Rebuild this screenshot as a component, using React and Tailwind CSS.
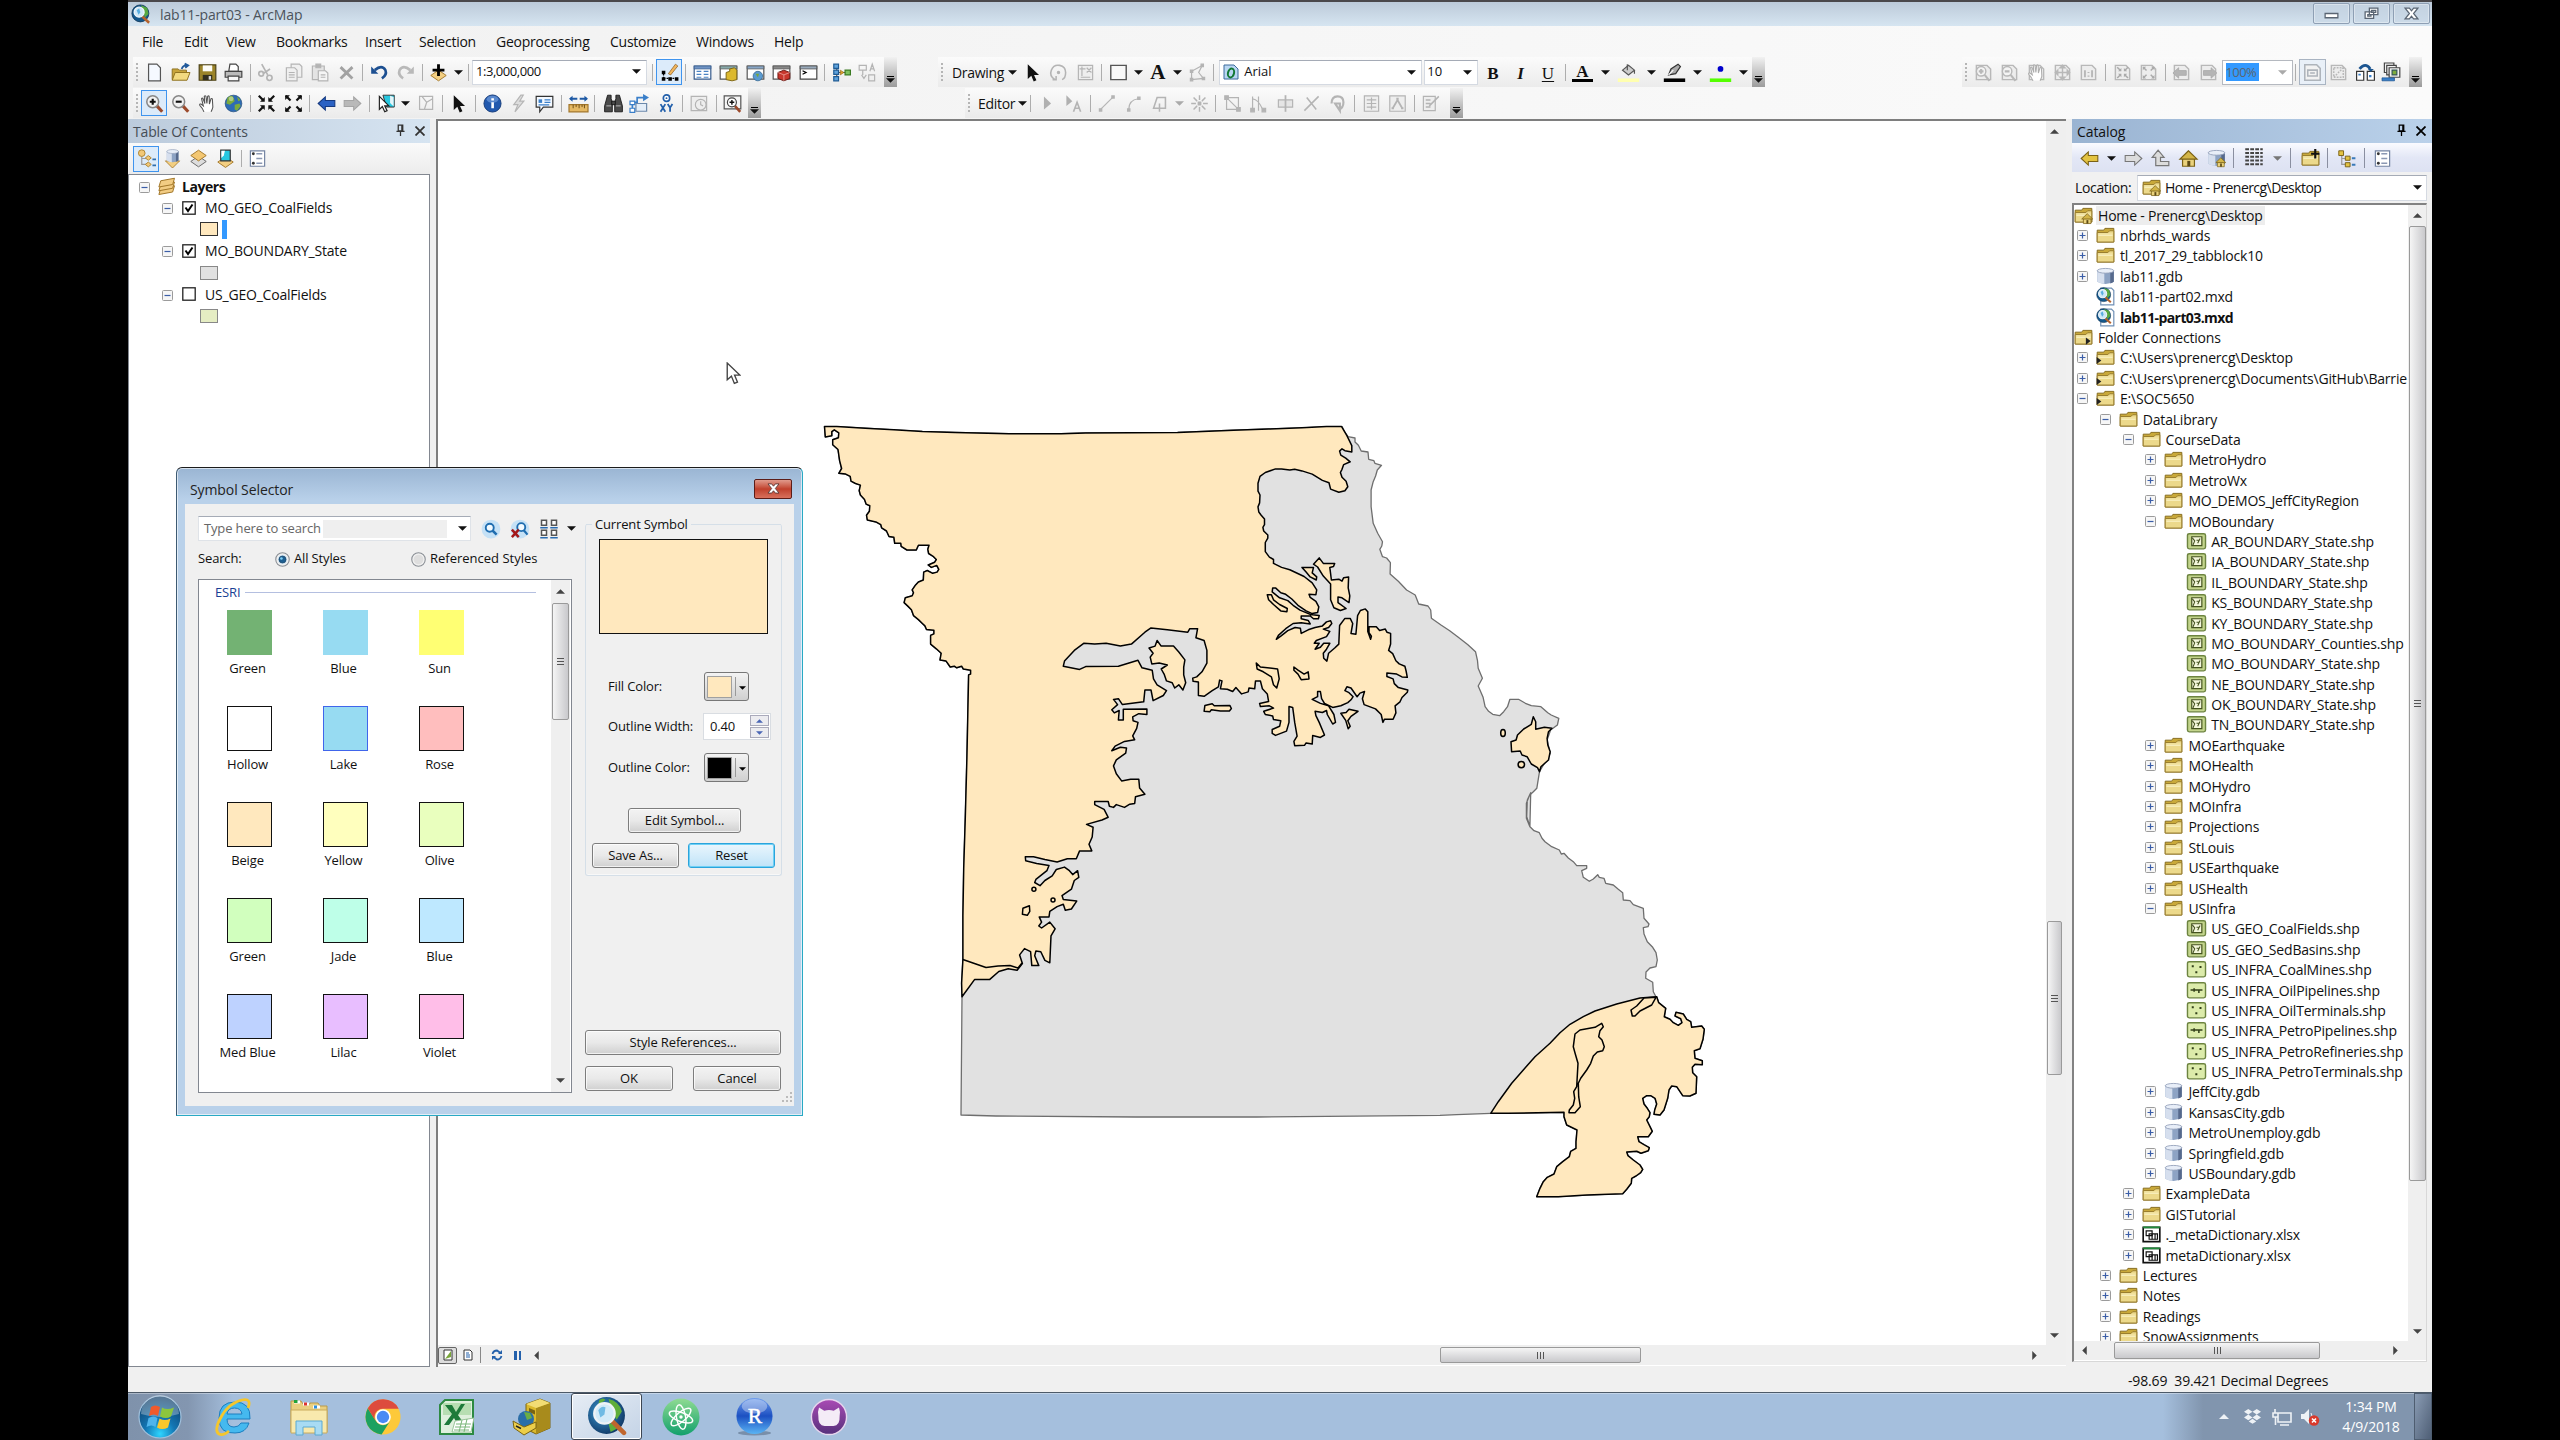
import React from "react";

/* ---------- map geometry ---------- */
const tile = (s, ox, oy, sx, sy) =>
  s
    .trim()
    .split(/\s+/)
    .map((p) => {
      const [x, y] = p.split(",").map(Number);
      return [ox + x / sx, oy + y / sy];
    });
const west = (s) => tile(s, 364, 291, 2.45, 2.529);
const east = (s) => tile(s, 764, 291, 2.904, 3);
const south = (s) => tile(s, 1004, 661, 3, 3);
const path = (pts) => "M" + pts.map((p) => p[0].toFixed(1) + " " + p[1].toFixed(1)).join("L") + "Z";

const TOP = "60,42 90,42 160,46 230,50 300,54 380,57 512,60 640,60 700,58 925,57 1062,51 1148,48 1230,45 1290,42 1327,42";
const LEFT =
  "397,1484 396,1450 399,1390 399,1280 401,1160 405,1030 409,880 411,770 413,670 418,668 418,658 400,655 396,648 384,652 378,648 368,650 358,635 343,632 346,615 334,604 320,592 320,570 328,566 328,557 310,555 306,546 300,540 290,530 278,520 273,505 264,496 255,487 258,475 275,470 278,462 275,455 282,444 290,435 302,430 303,410 312,406 325,413 336,410 340,403 335,393 322,398 314,392 330,385 334,378 326,370 315,363 313,352 316,342 290,342 285,354 262,354 248,345 247,337 232,337 230,322 218,320 212,306 200,298 198,290 186,283 165,278 163,266 170,256 171,242 162,238 158,226 148,215 145,204 148,190 136,186 125,180 123,168 112,162 95,160 102,148 97,128 93,100 80,88 80,75 94,70 95,58 84,50 78,55 78,65 62,68";
const COAL =
  TOP +
  " 1340,65 1352,90 1352,106 1335,103 1328,98 1322,104 1325,114 1337,122 1348,131 1332,138 1328,150 1324,158 1328,170 1338,180 1342,194 1335,204 1320,208 1300,200 1296,184 1280,178 1255,162 1230,154 1212,150 1200,152 1180,149 1165,149 1140,158 1127,168 1122,185 1122,205 1127,215 1126,235 1122,245 1124,258 1130,266 1138,276 1138,290 1134,297 1136,306 1146,316 1146,324 1140,335 1140,358 1150,372 1160,378 1160,388 1180,398 1200,404 1235,421 1255,437 1266,455 1264,467 1247,466 1250,474 1264,484 1271,498 1268,512 1255,515 1240,508 1220,494 1205,478 1190,466 1178,462 1165,450 1158,450 1157,460 1175,475 1195,482 1208,494 1225,506 1250,517 1272,520 1270,528 1258,528 1250,521 1228,521 1228,528 1245,532 1250,541 1228,538 1208,540 1190,553 1172,570 1167,580 1178,572 1195,558 1213,550 1226,552 1228,565 1245,556 1262,550 1280,546 1290,536 1300,533 1303,540 1295,550 1282,554 1298,560 1290,573 1265,583 1260,590 1272,590 1262,605 1275,600 1283,590 1298,590 1290,605 1282,615 1283,628 1291,635 1295,615 1310,602 1320,592 1322,545 1335,527 1348,527 1354,540 1350,565 1362,567 1366,520 1373,507 1385,503 1391,510 1391,560 1398,580 1400,572 1394,563 1394,548 1412,548 1420,558 1434,554 1438,562 1447,565 1447,592 1442,608 1452,616 1460,634 1468,642 1482,648 1485,660 1488,676 1475,675 1462,668 1438,665 1438,674 1453,680 1456,692 1466,702 1489,708 1488,714 1475,727 1470,738 1458,748 1460,766 1453,782 1432,782 1428,790 1424,770 1410,756 1382,745 1378,730 1383,712 1372,716 1365,725 1350,703 1340,700 1335,710 1345,715 1355,725 1350,733 1342,740 1325,748 1305,752 1285,742 1278,730 1275,712 1268,712 1268,725 1255,732 1275,742 1295,748 1308,770 1312,790 1305,794 1292,770 1290,760 1280,765 1262,762 1264,773 1272,790 1285,822 1275,828 1256,823 1255,845 1240,842 1236,848 1212,849 1210,838 1218,825 1212,790 1207,752 1198,750 1198,790 1192,812 1165,823 1157,818 1157,808 1175,800 1178,786 1160,783 1158,774 1140,770 1136,762 1160,754 1150,748 1128,750 1126,742 1148,737 1145,718 1133,705 1128,685 1116,685 1114,705 1100,703 1098,713 1082,718 1068,702 1060,712 1047,706 1030,705 1034,685 1028,683 1025,700 1010,710 990,724 976,722 976,688 963,686 962,678 972,675 985,662 997,640 997,608 990,583 970,576 974,553 955,553 950,562 900,556 860,551 845,562 812,592 785,597 750,590 722,592 695,590 672,608 648,635 645,648 685,656 700,649 780,648 828,633 838,652 863,658 866,680 875,695 898,710 890,722 865,735 860,708 845,708 842,738 790,745 780,730 768,732 778,745 764,758 770,766 782,760 780,784 792,784 792,757 850,756 850,770 830,768 815,776 816,786 828,790 825,805 815,824 820,834 795,838 772,850 764,862 785,853 800,855 798,868 775,885 768,900 775,920 788,938 810,934 830,934 832,956 845,972 822,978 820,995 808,997 795,1005 775,998 768,1005 758,1002 755,990 722,990 722,998 745,1010 755,1030 740,1037 702,1048 718,1055 716,1080 708,1098 715,1115 685,1115 677,1135 655,1135 630,1143 600,1137 572,1130 552,1130 553,1140 580,1147 610,1152 605,1165 578,1187 575,1195 588,1203 600,1190 618,1178 628,1162 648,1156 660,1165 668,1175 680,1165 683,1182 672,1190 665,1212 642,1228 645,1238 678,1242 665,1262 650,1265 645,1250 630,1256 612,1268 610,1282 586,1282 592,1295 585,1305 592,1310 612,1295 625,1312 615,1330 612,1398 600,1392 590,1370 578,1368 575,1380 585,1405 568,1405 565,1370 550,1362 538,1378 545,1400 532,1417 510,1413 487,1420 465,1440 428,1440 " +
  LEFT;
const RIVER =
  "413,50 420,66 430,80 450,84 450,96 460,106 468,123 488,126 490,148 505,152 508,160 527,166 515,180 510,198 503,215 497,240 497,290 503,340 516,370 530,395 528,408 522,418 530,440 542,444 553,458 552,492 576,514 600,540 625,555 635,582 662,588 670,600 672,625 700,645 725,662 750,682 778,704 800,725 806,752 808,775 820,805 808,828 822,862 828,890 838,904 850,913 870,917 882,905 893,890 900,868 925,868 945,880 962,887 990,890 1010,908 1020,915 1042,925 1038,945 1018,960 1008,990 1017,1030 986,1085 978,1135 965,1148 955,1160 948,1180 948,1225 958,1250";
const DELTA =
  "272,38 262,60 260,110 270,140 282,152 298,158 306,175 315,185 335,200 358,210 364,222 372,220 385,234 400,245 410,257 440,257 440,265 425,272 430,292 448,304 460,297 473,284 478,292 492,295 497,310 520,315 535,328 548,338 550,360 570,362 580,374 610,385 612,415 627,432 624,440 610,443 612,462 622,485 638,502 648,518 652,540 648,560 630,564 618,576 617,595 638,607 640,635 648,650";
const HEEL_EDGE =
  "650,650 656,668 677,685 673,710 690,718 700,728 715,736 726,728 722,716 705,708 708,697 730,702 740,718 752,725 755,742 785,738 793,748 789,778 780,806 763,812 765,835 787,842 787,854 765,853 757,862 758,878 770,890 768,940 750,948 728,947 710,920 695,918 687,930 683,955 672,990 660,1005 642,1003 644,990 650,972 645,955 632,947 620,947 608,955 612,972 622,985 630,998 628,1010 620,1020 630,1040 637,1054 625,1070 593,1070 597,1085 612,1094 628,1103 625,1112 603,1120 590,1114 560,1116 564,1127 580,1140 600,1155 608,1168 602,1178 588,1188 575,1195 574,1210 560,1228 548,1241 440,1245 355,1250 290,1250 300,1225 310,1205 322,1192 342,1182 350,1160 368,1145 388,1130 392,1114 408,1105 408,1085 411,1050 380,1035 372,1010 372,997 205,1000";
const HEEL = "152,1000 175,965 215,910 250,870 285,830 330,790 360,758 390,733 430,710 465,693 530,672 600,654 " + HEEL_EDGE;
const ISLANDS = [
  "875,583 885,597 915,597 928,612 943,632 940,650 940,670 945,690 938,708 928,695 918,703 912,690 898,685 892,668 885,655 900,645 880,640 862,642 858,625 865,615 855,602 870,597",
  "992,747 1010,743 1015,748 1053,747 1057,755 1052,761 1030,761 1008,758 1004,763 990,762",
  "1272,374 1282,388 1310,388 1307,396 1298,398 1302,430 1320,428 1328,433 1332,424 1344,422 1343,450 1347,470 1345,487 1328,475 1318,473 1318,487 1338,502 1324,507 1308,500 1300,480 1300,440 1282,420 1268,397 1258,390",
  "1230,398 1258,398 1255,412 1266,422 1265,430 1250,422 1240,410",
  "1325,767 1338,765 1345,757 1367,762 1350,775 1342,786 1348,800 1343,806 1337,785",
  "1145,467 1155,467 1160,480 1175,492 1194,502 1193,510 1178,508 1160,492 1148,480",
  "1118,640 1128,650 1170,655 1174,680 1168,703 1160,695 1155,675 1135,662 1120,655",
  "1210,650 1220,658 1235,668 1245,662 1247,680 1228,682 1220,668 1210,658",
  "545,1275 546,1260 562,1254 563,1268 557,1278",
].map((s) => path(west(s)));
const EAST_FIELD = "968,920 975,935 975,958 1000,952 1022,955 1012,965 1008,985 1010,1005 1017,1025 1012,1050 990,1070 986,1085 980,1073 962,1062 950,1040 935,1035 930,1023 905,1025 903,995 918,990 922,975 940,957 962,943";
const STATE = [
  ...west(TOP),
  ...east(RIVER),
  ...south(DELTA),
  ...south(HEEL_EDGE),
  ...south("152,1000 50,1004 0,1006"),
  [821, 998], [700, 998], [560, 997], [525, 996],
  ...west(LEFT),
];

function MissouriMap() {
  return (
    <svg className="h-full w-full" viewBox="2 2 1608 1224" fill="none" strokeLinejoin="round">
      <path d={path(STATE)} fill="#e1e1e1" stroke="#6e6e6e" strokeWidth="1.3" />
      <g fill="#ffe8be" stroke="#000" strokeWidth="1.500">
        <path d={path(west(COAL))} />
        {ISLANDS.map((d, i) => (
          <path key={i} d={d} />
        ))}
        <path d={path(east(EAST_FIELD))} />
        <path d={path(south(HEEL))} />
        <path d={path(south("485,730 490,740 480,752 476,770 486,780 493,800 488,812 472,816 460,828 452,850 440,870 422,895 415,910 416,950 421,980 405,998 387,998 388,990 400,975 404,955 401,935 410,920 414,850 406,822 400,800 405,762 420,750 465,742"))} />
        <path d={path(south("612,654 590,678 573,690 577,708 585,708 600,693 635,675 648,652"))} />
        <path fill="none" d="M526.9 840.5L537 844L550 848.5L562 847L574 846.500L582 849L586 844" />
        <circle cx="597.9" cy="770.2" r="2" />
        <circle cx="617" cy="781" r="2" />
        <ellipse cx="1067" cy="614" rx="2.3" ry="3.6" />
        <circle cx="1085.300" cy="645.6" r="3.2" />
      </g>
    </svg>
  );
}

/* ---------- icons ---------- */
const G = "#b4b4b4";
const Folder = (
  <g>
    <path d="M1 3.5h5.500l1-1.500H15v11.500H1z" fill="#c9a93a" stroke="#84691a" strokeWidth=".8" />
    <path d="M1 5.500h9l1.500-1.500H15v9.500H1z" fill="#ecd98b" stroke="#96792a" strokeWidth=".8" />
    <path d="M2 8h12M2 6.800h12" stroke="#f8eebc" strokeWidth=".8" />
  </g>
);
const page = (c, f = "#fff") => <path d="M3 1h7l3 3v11H3z" fill={f} stroke={c} />;
const magnifier = (sign) => (
  <g>
    <path d="M10 10l4.500 5" stroke="#9c4a2c" strokeWidth="2.600" />
    <circle cx="6.500" cy="6.500" r="5" fill="#f2f2f2" stroke="#888" strokeWidth="1.300" />
    <path d={sign ? "M4 6.500h5M6.500 4v5" : "M4 6.500h5"} stroke="#111" strokeWidth="1.800" />
  </g>
);
const globe = (
  <g>
    <circle cx="8" cy="8" r="7" fill="#2d6bb5" stroke="#1f4a7c" strokeWidth=".6" />
    <path d="M3 3q4-3 5 0l1 3-4 3-3-1zM9 9l4-1 1 2-3 4-2-1zM11 2l3 3-2 1z" fill="#7cab3c" />
    <circle cx="6" cy="4" r="2" fill="#fff" opacity=".4" />
  </g>
);
const arcGlobe = (
  <g>
    <circle cx="7.500" cy="7.500" r="6.800" fill="#14588c" stroke="#0b2f52" strokeWidth=".6" />
    <path d="M8 1l5 2 1 5-3 3-1-4z" fill="#58a842" />
    <path d="M9 10l5.500 5" stroke="#b5622c" strokeWidth="2" />
    <circle cx="6.500" cy="6.500" r="4" fill="#cfe8f7" stroke="#f1f6fa" strokeWidth="1" />
    <path d="M4.500 5l2-1.500 1 3-1.500 2z" fill="#5aaee0" />
  </g>
);
const cyl = (
  <g>
    <path d="M1 3v9.500q7 3.500 14 0V3z" fill="#8da3c4" />
    <path d="M1 3v9.500q2.500 1.500 6 1.700V4z" fill="#d6dfee" />
    <path d="M12 4v9.800q2-.3 3-1.300V3z" fill="#56698c" />
    <ellipse cx="8" cy="3.200" rx="7" ry="2" fill="#e8eef8" stroke="#8d9bb5" strokeWidth=".7" />
  </g>
);
const diamond = (y, f, s) => <path d={`M8 ${y}l6.500 4.500-6.500 4.500-6.500-4.500z`} fill={f} stroke={s} strokeWidth=".8" />;
const hand = (c) => (
  <path d="M5 15q-1-3-3.500-5.500q-.5-1.500 1-1l2 1.500-1.500-6q.5-1 1.300 0l1.500 4-.5-6q.7-1 1.400 0l.8 6 .6-6q.8-.8 1.300 0l.2 6.500 1.300-4.500q1-.6 1.200.4L12.500 11q-.5 2-1.500 4" fill="#fff" stroke={c} strokeWidth=".9" />
);
const house = (x, y, s) => (
  <g transform={`translate(${x} ${y}) scale(${s})`}>
    <path d="M3 8v6.500h10V8z" fill="#ead27c" stroke="#7a6116" />
    <path d="M8 1.500L.8 8.500h14.400z" fill="#d3b548" stroke="#7a6116" />
    <path d="M7 10h2.500v4.500H7z" fill="#5c4a15" />
  </g>
);
const arrowL = (f, s) => <path d="M1 8l6-5.500v3h8v5H7v3z" fill={f} stroke={s} strokeWidth=".9" />;
const arrowR = (f, s) => <path d="M15 8L9 2.500v3H1v5h8v3z" fill={f} stroke={s} strokeWidth=".9" />;
const corners = (inward, c, k = 1) => (
  <g stroke={c} strokeWidth={1.800 * k} fill={c}>
    {[0, 90, 180, 270].map((a) => (
      <g key={a} transform={`rotate(${a} 8 8)`}>
        <path d="M1.500 1.500l4 4" />
        <path d={inward ? "M6.500 2.500v4h-4z" : "M1 5V1h4z"} stroke="none" />
      </g>
    ))}
  </g>
);
const table = (c, h) => (
  <g>
    <path d="M1 2.500h14v11H1z" fill="#fff" stroke={c} />
    <path d="M1 2.500h14v2.500H1z" fill={h} stroke={c} strokeWidth=".6" />
  </g>
);
const greyPage = (inner) => (
  <g fill="none" stroke="#b8b8b8" strokeWidth="1.200">
    <path d="M2 2h9l3 3v9H2z" fill="#ededed" />
    {inner}
  </g>
);
const listIcon = (
  <g>
    <path d="M2 1.500h12v13H2z" fill="#fff" stroke="#7484a2" />
    <path d="M7 4h5M7 8h5M7 12h5" stroke="#8b98b3" strokeWidth="1.300" />
    <circle cx="4.500" cy="4" r="1.200" fill="#333" />
    <circle cx="4.500" cy="12" r="1.200" fill="#333" />
  </g>
);
const shp = (f, inner) => (
  <g>
    <rect x=".4" y="1.400" width="15.200" height="12.800" rx="1.500" fill={f} stroke="#6d8440" strokeWidth="1.200" />
    {inner}
  </g>
);
const treeIcon = (a, b) => (
  <g>
    <path d="M4 5v8h6M4 8h5" stroke="#999" fill="none" />
    <path d="M1.500 1.500h4v4h-4zM7 6h4v3.500H7zM7 11.500h4V15H7z" fill={a} stroke={b} strokeWidth=".8" />
    <path d="M12.500 7h3v1.700h-3zM12.500 12.500h3v1.700h-3z" fill="#3a7ab8" />
  </g>
);

const I = {
  new: page("#555", "#f5f9ff"),
  open: <g><path d="M1 5h5l1 1h6v8H1z" fill="#c7a43b" stroke="#8c701d" strokeWidth=".8" /><path d="M3.500 8H16l-2.500 6.500H1z" fill="#f2da80" stroke="#8c701d" strokeWidth=".8" /><path d="M9 5q1-3 4-3M11.500 .5l3 1.500-2.500 2" stroke="#20599b" fill="none" strokeWidth="1.500" /></g>,
  save: <g><path d="M1 1.500h14v13H1z" fill="#9b8429" stroke="#4d4317" /><path d="M4 2h8v5H4z" fill="#fdfdf8" /><path d="M4 10h8v4.500H4z" fill="#33301f" /><path d="M9 11h2v3H9z" fill="#ddd" /></g>,
  print: <g><path d="M5 1h5l2 2v4H4z" fill="#fff" stroke="#444" /><path d="M1 7h14v5H1z" fill="#bbb" stroke="#444" /><path d="M3.500 11h9v4h-9z" fill="#f8f8f8" stroke="#444" /></g>,
  cut: <g stroke={G} strokeWidth="1.400" fill="none"><path d="M4 1l5 9M11 5L5 9" /><circle cx="10.500" cy="12.500" r="2.200" /><circle cx="3.500" cy="9" r="2" /></g>,
  copy: <g stroke={G} fill="#f0f0f0"><path d="M6 1h7l2 2v9H6z" /><path d="M2 4h7l2 2v9H2z" /><path d="M4 8h5M4 10h5M4 12h5" /></g>,
  paste: <g stroke={G} fill="#e4e4e4"><path d="M2 2.500h10V14H2z" /><path d="M5 1h4v3H5z" fill={G} /><path d="M7 6.500h6l2 2V15H7z" fill="#f5f5f5" /><path d="M9 10h4M9 12h4" /></g>,
  del: <path d="M3 3.500l10 9.500M13 3.500L3 13" stroke="#a2a2a2" strokeWidth="2.400" />,
  undo: <g><path d="M4 6q6-5 9 0q1.500 4-3 7" stroke="#1c4f91" strokeWidth="2.200" fill="none" /><path d="M1 3v6h6z" fill="#1c4f91" /></g>,
  redo: <g><path d="M12 6q-6-5-9 0q-1.500 4 3 7" stroke="#b9b9b9" strokeWidth="2.200" fill="none" /><path d="M15 3v6H9z" fill="#b9b9b9" /></g>,
  add: <g>{diamond(6, "#f3cf82", "#a3782a")}<path d="M8 1v10M3 6h10" stroke="#000" strokeWidth="2.400" /></g>,
  edit: <g><path d="M3 13h10M3 13V8" stroke="#000" strokeDasharray="1.500 1" /><path d="M1.500 6.500h3v3h-3zM1.500 12h3v3h-3zM7 12h3v3H7zM12.500 12h3v3h-3z" fill="#000" /><path d="M7 9l6-8 2 1.500L9 10z" fill="#f2b65c" stroke="#8b5a1c" strokeWidth=".6" /></g>,
  t1: <g>{table("#355a8c", "#6f93c4")}<path d="M3 7h4M3 9.500h4M3 12h4M9 7h4M9 9.500h4M9 12h4" stroke="#4a83c4" /></g>,
  t2: <g>{table("#555", "#8aa")}<path d="M6 8l3-1v-2l4-1 2 2v8l-4 1-5-1z" fill="#dcb92e" stroke="#7d6513" strokeWidth=".8" /></g>,
  t3: <g>{table("#555", "#88a6c6")}<circle cx="10" cy="11" r="4" fill="#5b9bd0" stroke="#2b5f8a" strokeWidth=".6" /><path d="M8 9l3 0-1 3z" fill="#79a63a" /></g>,
  t4: <g>{table("#555", "#888")}<path d="M5 8l5-2 5 2v5l-5 2-5-2z" fill="#c8362c" stroke="#6d1712" strokeWidth=".8" /><path d="M5 8l5 2 5-2M10 10v5" stroke="#f0b0a8" strokeWidth=".6" fill="none" /></g>,
  t5: <g>{table("#444", "#9ab")}<path d="M3 6.500l3 1.500-3 1.500" stroke="#000" fill="none" /></g>,
  model: <g><path d="M4 3v10M4 8h8" stroke="#555" /><path d="M1.500 1h4v3.500h-4zM1.500 6h4v3.500h-4zM1.500 11.500h4V15h-4z" fill="#5fa3dc" stroke="#1d5a94" /><path d="M7 6l3 2-3 2z" fill="#dfa22c" stroke="#8d6214" strokeWidth=".5" /><path d="M11 6h4.500v4H11z" fill="#7fc25f" stroke="#3a7a22" /></g>,
  labelTool: <g stroke={G} fill="none"><path d="M1 2h6v4H1zM4 6v4M10 7l2-6 2 6M11 5h2.500M9 10h5v5H9zM3 10l2 3 2-3" /></g>,
  zin: magnifier(true),
  zout: magnifier(false),
  pan: hand("#555"),
  globe,
  cin: corners(true, "#111"),
  cout: corners(false, "#111"),
  back: arrowL("#2b62c4", "#163a80"),
  fwd: arrowR("#b9b9b9", "#a5a5a5"),
  selF: <g><path d="M5 1h9.500v10H8z" fill="#27c8e0" stroke="#333" strokeWidth=".8" /><path d="M11 1.500l3 1v8l-3-3z" fill="#e4f5fa" /><path d="M2 2v11l2.500-2.500 2 4.500 2-1-2-4h3.500z" fill="#fff" stroke="#222" /></g>,
  selC: <g stroke={G} fill="none"><path d="M3 2h11v11H3zM5 2l4 5-2 6M9 7l5-3" /></g>,
  ptr: <path d="M4 1v12.500l3-2.800 2 4.800 2.300-1-2-4.500H13.500z" fill="#111" />,
  info: <g><circle cx="8" cy="8" r="7.200" fill="#2259ae" stroke="#143a78" strokeWidth=".8" /><ellipse cx="8" cy="4.500" rx="5" ry="3" fill="#7fa9e3" opacity=".6" /><path d="M7 7h2.200v5H7zM7 3.500h2.200v2H7z" fill="#fff" /></g>,
  bolt: <path d="M10 1L4 9h3.500L5 15l7.500-9H9l3-5z" fill="#ddd" stroke="#b5b5b5" />,
  popup: <g><path d="M1 2h14v9H7l-3 4v-4H1z" fill="#f4f9ff" stroke="#333" /><path d="M3 4.500h3v3H3z" fill="#3a7fc9" /><path d="M8 5h5M8 7h5M3 9.200h9" stroke="#3a7fc9" /></g>,
  measure: <g><path d="M0 9h16v6H0z" fill="#e5b964" stroke="#a2762a" /><path d="M3.500 9v3M6 9v2M8.500 9v3M11 9v2M13 9v3" stroke="#6d4d15" strokeWidth=".8" /><path d="M1 4h6M9 4h6" stroke="#1f5aa5" strokeWidth="1.600" /><path d="M0 4l3-2.500v5zM16 4l-3-2.500v5z" fill="#1f5aa5" /></g>,
  binoc: <g fill="#4a4a4a" stroke="#111" strokeWidth=".7"><path d="M3 1h3v3l1 3v8H.5v-5zM10 1h3l2.500 9v5H9V7l1-3z" /><path d="M6.500 6h3v3h-3z" /><path d="M2 10h4M10 10h4" stroke="#ccc" /></g>,
  route: <g fill="none"><path d="M2 14V7h4V3h6" stroke="#3a7fc9" strokeWidth="1.400" /><path d="M11 0l5 3-5 3z" fill="#3a7fc9" /><path d="M5 8h9v6.500H5z" fill="#e4eef8" stroke="#6b88aa" /><path d="M0 12h4v3.500H0zM0 6h4v3H0z" fill="#fff" stroke="#3a7fc9" /></g>,
  xy: <g><circle cx="8" cy="3.500" r="2.700" fill="#fff" stroke="#2360ab" strokeWidth="1.400" /><circle cx="8" cy="3.500" r=".8" fill="#2360ab" /><path d="M3 8.500l4 6.500M7 8.500L3 15M9 8.500l2 3 2-3M11 11.500V15" stroke="#2360ab" strokeWidth="1.500" fill="none" /></g>,
  time: <g stroke={G} fill="#eee"><path d="M1 2h13v12H1z" /><circle cx="9" cy="9" r="4.500" /><path d="M9 6v3l2 1" fill="none" /></g>,
  viewer: <g><path d="M1 1.500h14v11H1z" fill="#f5f5f5" stroke="#555" /><path d="M10 10l4.500 5" stroke="#9c4a2c" strokeWidth="2.200" /><circle cx="7.500" cy="7" r="3.800" fill="#fff" stroke="#444" /><path d="M5.500 7h4M7.500 5v4" stroke="#111" strokeWidth="1.200" /></g>,
  rot: <g fill="none" stroke={G} strokeWidth="1.300"><path d="M5 14Q0 11 2 6t7-4 5 6-3 6M3 14h3v-3" /><circle cx="8" cy="8" r=".8" fill={G} /></g>,
  zoomSel: <g fill="#eee" stroke={G}><path d="M2 2h12v12H2z" /><path d="M5 3v8M3 5h5M9 4l4 4M13 4L9 8M4 12h8" /></g>,
  rect: <path d="M1.500 2h13v12h-13z" fill="#f8f8f8" stroke="#555" strokeWidth="1.200" />,
  poly: <g fill="none" stroke={G}><path d="M3 14V7l9-5-3 6 4 5z" /><path d="M2 6h2v2H2zM11 1h2v2h-2zM2 13h2v2H2zM12 12h2v2h-2z" fill={G} /></g>,
  bucket: <g><path d="M3 6l5-4 5 4-5 4z" fill="#ccc" stroke="#555" /><path d="M7 6V1M13 6v3" stroke="#555" /><path d="M-1 13h18v3H-1z" fill="#ffffb0" /></g>,
  pen: <g><path d="M3 10l2-5 6-4 2 2-4 6z" fill="#aaa" stroke="#333" /><path d="M3 10l4-4" stroke="#fff" /><path d="M-1 13h18v3H-1z" fill="#000" /></g>,
  dot: <g><circle cx="8" cy="5" r="2.400" fill="#0000cc" /><path d="M-1 13h18v3H-1z" fill="#55ff00" /></g>,
  e1: <path d="M5 2v11l6-5z" fill="#b0b0b0" />,
  e2: <g><path d="M2 1v9l5-4z" fill="#b0b0b0" /><path d="M8 15l3-8 3 8M9 12h4" stroke={G} fill="none" strokeWidth="1.400" /></g>,
  e3: <g stroke={G}><path d="M3 13L13 3" /><path d="M1.500 12h3v3h-3zM12 1h3v3h-3z" fill={G} stroke="none" /></g>,
  e4: <g stroke={G} fill="none"><path d="M4 13Q4 5 12 4" /><path d="M2.500 12h3v3h-3zM11 2h3v3h-3z" fill={G} stroke="none" /></g>,
  e5: <g stroke={G} fill="none" strokeWidth="1.300"><path d="M3 12L6 3h7v9zM8 8v7M5 12h6" /></g>,
  e6: <g stroke={G} strokeWidth="1.200"><path d="M8 1v4M8 11v4M1 8h4M11 8h4M3 3l3 3M13 3l-3 3M3 13l3-3M13 13l-3-3" /><path d="M7 7h2v2H7z" fill={G} /></g>,
  e7: <g stroke={G} fill="none"><path d="M3 3v10h10zM3 3h10v10" /><path d="M1.500 1.500h3v3h-3zM11.500 11.500h3v3h-3z" fill={G} /></g>,
  e8: <g stroke={G} fill="none"><path d="M3 2v12M8 2v12M3 4q5 1 8 8" /><path d="M1.500 12h3v3h-3zM11 12h3v3h-3z" fill={G} /></g>,
  e9: <g stroke={G} fill="#e5e5e5"><path d="M2 5h12v6H2z" /><path d="M8 1v14" strokeWidth="1.500" /></g>,
  e10: <path d="M2 14L14 2M4 3l8 10" stroke={G} strokeWidth="1.300" />,
  e11: <path d="M3 8Q3 2 8 2t5 5-4 6M6 8h4v6z" stroke={G} strokeWidth="1.800" fill="none" />,
  e12: <g stroke={G} fill="#eee"><path d="M2 1.500h12v13H2z" /><path d="M4 5h8M4 8h8M4 11h8M8 3v10" /></g>,
  e13: <g stroke={G} fill="#eee"><path d="M1.500 1.500h13v13h-13z" /><path d="M4 12l4-7 4 7M7 4h2M3 12h2M11 12h2" strokeWidth="1.500" /></g>,
  e14: <g stroke={G} fill="#eee"><path d="M2 2h10v12H2z" /><path d="M4 5h4M4 8h4M4 11h4M7 10l8-8" strokeWidth="1.300" /></g>,
  p1: greyPage(<g><circle cx="6" cy="7" r="4" fill="#f4f4f4" /><path d="M4 7h4M6 5v4M9 10l4 5" strokeWidth="1.800" /></g>),
  p2: greyPage(<g><circle cx="6" cy="7" r="4" fill="#f4f4f4" /><path d="M4 7h4M9 10l4 5" strokeWidth="1.800" /></g>),
  p3: <g>{greyPage(null)}{hand("#adadad")}</g>,
  p4: greyPage(<path d="M8 3v10M3 8h10M8 2L6 4h4zM8 14l-2-2h4zM2 8l2-2v4zM14 8l-2-2v4z" fill="#b8b8b8" />),
  p5: greyPage(<path d="M5 6v6M11 6v6M8 7.500v1M8 10.500v1" strokeWidth="1.600" />),
  p6: greyPage(<g transform="translate(2.500 2.500) scale(.7)">{corners(true, "#aaa")}</g>),
  p7: greyPage(<g transform="translate(2.500 2.500) scale(.7)">{corners(false, "#aaa")}</g>),
  p8: <g>{greyPage(null)}<g transform="translate(0 2) scale(.8)">{arrowL("#b5b5b5", "#aaa")}</g></g>,
  p9: <g>{greyPage(null)}<g transform="translate(3 2) scale(.8)">{arrowR("#b5b5b5", "#aaa")}</g></g>,
  p10: <g fill="none" stroke="#aeb4bb" strokeWidth="1.300"><path d="M1.500 1.500h10l3 3v10h-13z" fill="#f2f2f2" /><path d="M4 6h8v5H4zM6 8.500h4" /></g>,
  p11: greyPage(<path d="M4 4h8v8H4zM4 12l8-8" strokeDasharray="1.500 1" />),
  p12: <g><path d="M.5 7h6v7.500h-6zM9.500 7h6v7.500h-6z" fill="#fff" stroke="#333" /><path d="M3 5q5-6 9 0" stroke="#1c5590" strokeWidth="2.400" fill="none" /><path d="M10 5h5l-2.500 2.500z" fill="#1c5590" /><path d="M11 10h2v2h-2zM2 9h2v1.500H2z" fill="#3a7fc9" /></g>,
  p13: <g fill="#f2f2f2" stroke="#444"><path d="M2 0h8v8H2z" /><path d="M4 2h8v8H4z" /><path d="M6 4h9v8H6z" /><path d="M8.500 6h4v4h-4z" fill="#7cab3c" stroke="#355" /><path d="M0 12.500h10.500v2.500H0z" fill="#3a7fc9" stroke="#1c5590" strokeWidth=".6" /></g>,
  toc1: <g><path d="M4 5v8h5M4 8h4" stroke="#999" fill="none" /><circle cx="4" cy="3.500" r="2.800" fill="#f2c877" stroke="#ae8534" strokeWidth=".8" /><path d="M9.500 5.500l2.500 2-2.500 2-2.500-2zM9.500 11l2.500 2-2.500 2-2.500-2z" fill="#f2c877" stroke="#ae8534" strokeWidth=".8" /><path d="M13 8h3v1.500h-3zM13 13h3v1.500h-3z" fill="#2f6fae" /></g>,
  toc2: <g><path d="M8 16l-6-6h12z" fill="#f3cf82" stroke="#a3782a" strokeWidth=".7" /><g transform="translate(2.500 -.5) scale(.7 .82)">{cyl}</g></g>,
  toc3: <g>{diamond(6, "#ddd", "#666")}{diamond(1, "#f3c772", "#a3782a")}</g>,
  toc4: <g>{diamond(6.500, "#f3cf82", "#a3782a")}<path d="M4 1h8v9H4z" fill="#27c8e0" stroke="#333" /><path d="M4.500 1.500h3l-1 4-2 2z" fill="#fff" /></g>,
  list: listIcon,
  layers: <g>{[9, 6, 3].map((y) => <path key={y} d={`M3 ${y}l11-2-1.500 5-11 2z`} fill="#f2cc83" stroke="#a3782a" strokeWidth=".8" />)}</g>,
  cBack: arrowL("#e3c342", "#7a6116"),
  cFwd: arrowR("#dcdcdc", "#777"),
  cUp: <path d="M6 1L1 7h3v7h11v-3.500H8V7h3z" fill="#dcdcdc" stroke="#777" />,
  cHome: house(0, 0, 1),
  cDb: <g>{cyl}{house(7, 6.500, 0.58)}</g>,
  cGrid: <path d="M1 1h14M1 4h14M1 7h14M1 10h14M1 13h14" stroke="#444" strokeWidth="1.600" strokeDasharray="3 1" />,
  cConn: <g>{Folder}<path d="M12 0v8M8.500 4h7" stroke="#111" strokeWidth="1.800" /></g>,
  cTree: treeIcon("#e3c342", "#7a6116"),
  folder: Folder,
  homeF: <g>{Folder}{house(6, 5.500, 0.64)}</g>,
  connF: <g>{Folder}<path d="M10 8l4 3-4 3z" fill="#222" /></g>,
  connL: <g>{Folder}<path d="M.5 7.500l4 3-4 3z" fill="#222" /></g>,
  gdb: cyl,
  mxd: <g><path d="M4 1h9l2 2v12H4z" fill="#fff" stroke="#6f8fb5" />{<g transform="scale(.86)">{arcGlobe}</g>}</g>,
  shpP: shp("#c3d48c", <g><path d="M4 4h8.500v7.500H4z" fill="#f4f7dc" stroke="#44521f" /><path d="M4.500 5l2 2.500-1.500 3.500M8 7h2M9 9.500l2-4" stroke="#44521f" strokeWidth=".9" fill="none" /></g>),
  shpD: shp("#dcebaa", <path d="M4 4.500h1.700v1.700H4zM10.500 5h1.700v1.700h-1.700zM7 9.500h1.700v1.700H7z" fill="#33401a" />),
  shpL: shp("#dcebaa", <path d="M3 7.500h10M6 6v3M10 7.500v2.500" stroke="#33401a" strokeWidth="1.300" />),
  xls: <g><path d="M1 2h14v12H1z" fill="#fff" stroke="#111" strokeWidth="1.400" /><path d="M1 2h14" stroke="#1f8a3a" strokeWidth="1.500" /><path d="M3.500 5h5v4h-5zM6 7.500h7V12H6z" fill="#fff" stroke="#111" /><path d="M8.500 7.500V12M11 7.500V12" stroke="#111" /></g>,
  arc: arcGlobe,
  find: <g><circle cx="8" cy="8" r="7.500" fill="#c5e1f6" /><path d="M9 9l3.500 3.500" stroke="#1f6db0" strokeWidth="2" /><circle cx="7" cy="7" r="3.200" fill="#f2faff" stroke="#1f6db0" strokeWidth="1.500" /></g>,
  unfind: <g><circle cx="8" cy="8" r="7.500" fill="#c5e1f6" /><circle cx="9" cy="6.500" r="3.200" fill="#f2faff" stroke="#1f6db0" strokeWidth="1.500" /><path d="M11 9l3 3.500" stroke="#1f6db0" strokeWidth="1.800" /><path d="M1.500 8.500l5.500 6M7 8.500l-5.500 6" stroke="#a3181a" strokeWidth="2" /></g>,
  grid4: <g><path d="M2 1h4v4H2zM10 1h4v4h-4zM2 9h4v4H2zM10 9h4v4h-4z" fill="#fff" stroke="#555" strokeWidth="1.200" /><path d="M1 7h6M9 7h6M1 15h6M9 15h6" stroke="#2a6cb0" strokeWidth="1.300" /></g>,
};

const Icon = ({ n, s = "h-[19px] w-[19px]" }) => (
  <svg viewBox="0 0 16 16" className={`${s} shrink-0 overflow-visible`} fill="none">
    {I[n]}
  </svg>
);
const Down = ({ c = "#111" }) => (
  <svg viewBox="0 0 8 4" className="h-[5px] w-[9px] shrink-0"><path d="M0 0h8L4 4z" fill={c} /></svg>
);
const Tri = ({ r = 0 }) => (
  <svg viewBox="0 0 8 4" className="h-[5px] w-[9px]" style={{ transform: `rotate(${r}deg)` }}><path d="M0 0h8L4 4z" fill="#444" /></svg>
);

/* ---------- toolbars ---------- */
const Cell = ({ w, children, on }) => (
  <div
    style={{ width: w }}
    className={`flex h-[26px] shrink-0 items-center justify-center ${on === "blue" ? "border border-[#3f94ee] bg-[#dcebfa]" : on === "grey" ? "border border-[#a9b4c2] bg-[#e9f0f8]" : ""}`}
  >
    {children}
  </div>
);
const SERIF = "font-['Liberation_Serif',serif] leading-none text-[#111]";
const GLYPHS = {
  bigA: <span className={`${SERIF} text-[21px] font-bold`}>A</span>,
  B: <span className={`${SERIF} pt-[2px] text-[17px] font-bold`}>B</span>,
  It: <span className={`${SERIF} pt-[2px] text-[17px] font-bold italic`}>I</span>,
  U: <span className={`${SERIF} pt-[2px] text-[17px] underline underline-offset-2`}>U</span>,
  cA: <div className="flex flex-col items-center"><span className={`${SERIF} h-[16px] text-[17px] font-bold`}>A</span><div className="h-[3px] w-[21px] bg-black" /></div>,
};
function Bar({ items, w = "w-auto" }) {
  return (
    <div className={`flex h-[30px] shrink-0 items-center bg-gradient-to-b from-[#fbfbfb] to-[#ebebeb] ${w}`}>
      <div className="ml-[3px] mr-[2px] h-[18px] w-[3px] shrink-0 border-l-2 border-dotted border-[#b5b5b5]" />
      {items.map((it, i) => {
        if (typeof it !== "string") return <React.Fragment key={i}>{it}</React.Fragment>;
        if (it === "|") return <Cell key={i} w={6.8}><div className="h-[17px] w-px bg-[#adadad]" /></Cell>;
        if (it === "v") return <Cell key={i} w={13}><Down /></Cell>;
        if (it === "w") return <Cell key={i} w={18}><Down /></Cell>;
        if (it === "x") return <Cell key={i} w={13}><Down c="#aaa" /></Cell>;
        if (GLYPHS[it]) return <Cell key={i} w={it === "bigA" ? 26.450 : 27.500}>{GLYPHS[it]}</Cell>;
        const on = it[0] === "*" ? "blue" : it[0] === "#" ? "grey" : "";
        const wide = it === "bucket" || it === "pen" || it === "dot";
        return <Cell key={i} w={wide ? 28 : 26.450} on={on}><Icon n={on ? it.slice(1) : it} /></Cell>;
      })}
      <div className="ml-auto flex h-full w-[13px] shrink-0 flex-col items-center justify-end gap-px bg-gradient-to-b from-[#f2f2f2] to-[#9c9c9c] pb-1">
        <div className="h-px w-[7px] bg-black" />
        <Down />
      </div>
    </div>
  );
}

const MENU = [["File", 42], ["Edit", 42], ["View", 50], ["Bookmarks", 89], ["Insert", 54], ["Selection", 77], ["Geoprocessing", 114], ["Customize", 86], ["Windows", 78], ["Help", 40]];

function WinBtn({ children }) {
  return (
    <div className="flex h-[21px] w-[37px] items-center justify-center rounded-[2px] border border-[#8e9fb4] bg-[#c6d5e4]/60 shadow-[inset_0_0_0_1px_rgba(255,255,255,.35)]">
      <svg viewBox="0 0 16 12" className="h-[13px] w-[17px]" fill="#fff" stroke="#5a6573" strokeWidth="1.200">{children}</svg>
    </div>
  );
}

function Header() {
  return (
    <header className="flex h-[119px] shrink-0 flex-col bg-gradient-to-r from-[#f1f1f1] to-[#fbfbfb]">
      <div className="flex h-[26px] shrink-0 items-center border-t-2 border-[#4a484b] bg-gradient-to-b from-[#bccad9] to-[#d6e5f1] pl-[3px] pr-[2px]">
        <Icon n="arc" s="h-5 w-5" />
        <span className="ml-[9px] text-[14px] tracking-[-0.150px] text-[#4c535b]">lab11-part03 - ArcMap</span>
        <div className="ml-auto flex gap-[3px] pb-[2px]">
          <WinBtn><path d="M2 6h12v4H2z" /></WinBtn>
          <WinBtn><path d="M6 1h8v6H6zM8 3h4v2H8zM2 4.500h8v6H2zM4.500 7h3v1.500h-3z" /></WinBtn>
          <WinBtn><path d="M2 1h4l2 2.500L10 1h4l-4 5 4 5h-4L8 8.500 6 11H2l4-5z" /></WinBtn>
        </div>
      </div>
      <nav className="flex h-[31px] items-center pl-[14px] text-[14px] tracking-[-0.250px] text-[#111]">
        {MENU.map(([m, w]) => <span key={m} style={{ width: w }} className="whitespace-nowrap">{m}</span>)}
      </nav>
      <div className="flex h-[31px] items-start pl-[5px]">
        <Bar
          w="w-[764px]"
          items={[
            "new", "open", "save", "print", "|", "cut", "copy", "paste", "del", "|", "undo", "redo", "|", "add", "v", "|",
            <div key="s" className="mr-[2px] flex h-[25px] w-[175px] shrink-0 items-center justify-between border border-[#d5dae2] border-t-[#a5abb6] bg-white pb-px pl-[3px] pr-[5px] text-[13px] tracking-[-0.450px]">1:3,000,000<Down /></div>,
            "|", "*edit", "|", "t1", "t2", "t3", "t4", "t5", "|", "model", "labelTool",
          ]}
        />
        <Bar
          w="ml-[41px] w-[824px]"
          items={[
            <span key="d" className="w-[60px] shrink-0 pl-[6px] text-[14px] tracking-[-0.300px]">Drawing</span>, "v",
            "ptr", "rot", "zoomSel", "|", "rect", "v", "bigA", "v", "poly", "|",
            <div key="f" className="ml-[2px] flex h-[25px] w-[203px] shrink-0 items-center border border-[#d5dae2] border-t-[#a5abb6] bg-white pl-[3px] pr-[5px] text-[13px]">
              <svg viewBox="0 0 16 16" className="mr-[5px] h-[18px] w-[16px]"><path d="M1 1h10l4 4v10H1z" fill="#b9d6f2" stroke="#3c6a9c" /><ellipse cx="8" cy="9" rx="3" ry="4.500" fill="none" stroke="#173" strokeWidth="2" transform="rotate(15 8 9)" /></svg>
              Arial<span className="ml-auto flex"><Down /></span>
            </div>,
            <div key="z" className="ml-[2px] mr-[1px] flex h-[25px] w-[54px] shrink-0 items-center justify-between border border-[#d5dae2] border-t-[#a5abb6] bg-white pl-[2px] pr-[5px] text-[13px]">10<Down /></div>,
            "B", "It", "U", "|", "cA", "w", "bucket", "w", "pen", "w", "dot", "w",
          ]}
        />
        <Bar
          w="ml-[200px] w-[460px]"
          items={[
            "p1", "p2", "p3", "p4", "p5", "|", "p6", "p7", "|", "p8", "p9",
            <div key="c" className="flex h-[25px] w-[71px] shrink-0 items-center justify-between border border-[#b5b9c0] bg-white pl-[3px] pr-[5px]"><span className="flex h-[18px] w-[33px] items-center bg-[#3399ff] text-[13px] leading-[18px] tracking-[-0.600px] text-[#5a6570]">100%</span><Down c="#aaa" /></div>,
            "|", "#p10", "p11", "p12", "p13",
          ]}
        />
      </div>
      <div className="flex h-[31px] items-start pl-[5px]">
        <Bar
          w="w-[628px]"
          items={["*zin", "zout", "pan", "globe", "|", "cin", "cout", "|", "back", "fwd", "|", "selF", "v", "selC", "|", "ptr", "|", "info", "bolt", "popup", "|", "measure", "|", <div key="g" className="w-[2px]" />, "binoc", "route", "xy", "|", "time", "|", "viewer"]}
        />
        <Bar
          w="ml-[204px] w-[498px]"
          items={[
            <span key="e" className="w-[44px] shrink-0 pl-[5px] text-[14px] tracking-[-0.300px]">Editor</span>, <Cell key="v" w={10}><Down /></Cell>, "|",
            "e1", "e2", "|", "e3", "e4", "e5", "x", "e6", "|", "e7", "e8", "e9", "e10", "e11", "|", "e12", "e13", "|", "e14",
          ]}
        />
      </div>
    </header>
  );
}

/* ---------- docks ---------- */
const PinX = ({ c }) => (
  <div className="ml-auto flex items-center gap-[10px] pb-px">
    <svg viewBox="0 0 10 14" className="h-[13px] w-[9px]" fill="none" stroke={c} strokeWidth="1.400"><path d="M2.500 1h5v6.500h-5zM.5 8h9M5 8v5M6.500 1v6.500" /></svg>
    <svg viewBox="0 0 10 10" className="h-[10px] w-[10px]" stroke={c} strokeWidth="1.800"><path d="M.5.500l9 9M9.500.500l-9 9" /></svg>
  </div>
);
const Expander = ({ open }) => (
  <svg viewBox="0 0 11 11" className="h-[11px] w-[11px] shrink-0"><rect x=".5" y=".5" width="10" height="10" rx="1" fill="#f6f6f6" stroke="#9b9b9b" /><path d={open ? "M2.500 5.500h6" : "M2.500 5.500h6M5.500 2.500v6"} stroke="#3b5ea8" strokeWidth="1.200" /></svg>
);
const Check = ({ on }) => (
  <svg viewBox="0 0 14 14" className="h-[14px] w-[14px] shrink-0"><rect x=".8" y=".8" width="12.400" height="12.400" fill="#fff" stroke="#222" strokeWidth="1.300" />{on && <path d="M3.500 6.500l2.500 3.500 4.500-6.500" fill="none" stroke="#000" strokeWidth="2" />}</svg>
);

function Layer({ name, on, fill, line, sel }) {
  return (
    <>
      <div className="flex h-[21.600px] items-center pl-[33px]">
        <div className="flex pt-[2px]"><Expander open /></div>
        <div className="ml-[9px] flex"><Check on={on} /></div>
        <span className="ml-[9px] text-[14px] tracking-[-0.200px]">{name}</span>
      </div>
      <div className="flex h-[21.600px] items-center pl-[71px]">
        <div style={{ background: fill, borderColor: line }} className="h-[14px] w-[18px] border-[1.500px]" />
        {sel && <div className="ml-[4px] h-[19px] w-[5px] bg-[#3399ff]" />}
      </div>
    </>
  );
}

function Toc() {
  return (
    <aside className="flex w-[302px] shrink-0 flex-col">
      <div className="flex h-[24px] shrink-0 items-center bg-gradient-to-r from-[#bccbdc] to-[#d6e4f1] pl-[5px] pr-[5px]">
        <span className="text-[14px] tracking-[-0.150px] text-[#454c55]">Table Of Contents</span>
        <PinX c="#333" />
      </div>
      <div className="flex h-[31px] shrink-0 items-center bg-gradient-to-b from-[#fafafa] to-[#ececec] pl-[5px]">
        <Cell w={26} on="blue"><Icon n="toc1" /></Cell>
        <Cell w={26.450}><Icon n="toc2" /></Cell>
        <Cell w={26.450}><Icon n="toc3" /></Cell>
        <Cell w={26.450}><Icon n="toc4" /></Cell>
        <Cell w={6}><div className="h-[17px] w-px bg-[#adadad]" /></Cell>
        <Cell w={27}><Icon n="list" /></Cell>
      </div>
      <div className="h-[1193px] border border-[#828790] bg-white">
        <div className="flex h-[22px] items-center pl-[10px] pt-px">
          <div className="flex pt-[2px]"><Expander open /></div>
          <div className="ml-[7px] flex"><Icon n="layers" s="h-5 w-5" /></div>
          <b className="ml-[5px] text-[14px] tracking-[-0.450px]">Layers</b>
        </div>
        <Layer name="MO_GEO_CoalFields" on fill="#ffe8be" line="#333" sel />
        <Layer name="MO_BOUNDARY_State" on fill="#e1e1e1" line="#888" />
        <Layer name="US_GEO_CoalFields" fill="#e5edc3" line="#888" />
      </div>
    </aside>
  );
}

const Thumb = ({ vertical, cls }) => (
  <div className={`flex shrink-0 items-center justify-center gap-[2px] rounded-[2px] border border-[#9a9a9a] ${vertical ? "flex-col bg-gradient-to-r from-[#f5f5f5] to-[#c9c9cc]" : "bg-gradient-to-b from-[#f5f5f5] to-[#c9c9cc]"} ${cls}`}>
    {[0, 1, 2].map((i) => <div key={i} className={vertical ? "h-px w-[7px] bg-[#555]" : "h-[7px] w-px bg-[#555]"} />)}
  </div>
);

function MapView() {
  return (
    <main className="ml-[6px] flex w-[1630px] shrink-0 flex-col border-l-2 border-[#7e7e7e]">
      <div className="flex h-[1226px]">
        <div className="h-full w-[1608px] border-t-2 border-[#7e7e7e] bg-white"><MissouriMap /></div>
        <div className="flex w-[20px] flex-col items-center border-t-2 border-[#7e7e7e] bg-[#efefef] pr-[3px]">
          <div className="flex h-[20px] items-center"><Tri r={180} /></div>
          <Thumb vertical cls="mt-[780px] h-[154px] w-[15px]" />
          <div className="mt-auto flex h-[20px] items-center"><Tri /></div>
        </div>
      </div>
      <div className="flex h-[21px] items-center border-b border-white bg-[#efefef]">
        <div className="flex h-[17px] w-[19px] items-center justify-center rounded-[2px] border border-[#666] bg-[#ddd]"><svg viewBox="0 0 10 12" className="h-[12px] w-[10px]"><path d="M1 1h8v10H1z" fill="#fff" stroke="#333" /><path d="M2 10l6-8v6z" fill="#79a63a" /></svg></div>
        <svg viewBox="0 0 10 12" className="ml-[6px] h-[12px] w-[10px]"><path d="M1 1h6l2 2v8H1z" fill="#fff" stroke="#333" /><path d="M3 4h3M3 6h4M3 8h4" stroke="#2360ab" /></svg>
        <div className="ml-[7px] h-[16px] w-px bg-[#888]" />
        <svg viewBox="0 0 12 12" className="ml-[10px] h-[12px] w-[12px]" fill="none" stroke="#2360ab" strokeWidth="1.800"><path d="M1.500 5q1-3.500 4.500-3.500L9.500 4M10.500 7q-1 3.500-4.500 3.500L2.500 8" /><path d="M11 1v4H7zM1 11V7h4z" fill="#2360ab" stroke="none" /></svg>
        <div className="ml-[11px] flex gap-[2px]"><div className="h-[9px] w-[2.500px] bg-[#2360ab]" /><div className="h-[9px] w-[2.500px] bg-[#2360ab]" /></div>
        <div className="ml-[11px] flex w-[14px]"><Tri r={90} /></div>
        <Thumb cls="ml-[894px] h-[16px] w-[201px]" />
        <div className="ml-auto mr-[27px]"><Tri r={270} /></div>
      </div>
    </main>
  );
}

const TREE = [
  [0, "", "homeF", "Home - Prenercg\\Desktop", "hl"],
  [1, "+", "folder", "nbrhds_wards"],
  [1, "+", "folder", "tl_2017_29_tabblock10"],
  [1, "+", "gdb", "lab11.gdb"],
  [1, "", "mxd", "lab11-part02.mxd"],
  [1, "", "mxd", "lab11-part03.mxd", "bold"],
  [0, "", "connF", "Folder Connections"],
  [1, "+", "connL", "C:\\Users\\prenercg\\Desktop"],
  [1, "+", "connL", "C:\\Users\\prenercg\\Documents\\GitHub\\Barrie"],
  [1, "-", "connL", "E:\\SOC5650"],
  [2, "-", "folder", "DataLibrary"],
  [3, "-", "folder", "CourseData"],
  [4, "+", "folder", "MetroHydro"],
  [4, "+", "folder", "MetroWx"],
  [4, "+", "folder", "MO_DEMOS_JeffCityRegion"],
  [4, "-", "folder", "MOBoundary"],
  ...["AR_BOUNDARY_State", "IA_BOUNDARY_State", "IL_BOUNDARY_State", "KS_BOUNDARY_State", "KY_BOUNDARY_State", "MO_BOUNDARY_Counties", "MO_BOUNDARY_State", "NE_BOUNDARY_State", "OK_BOUNDARY_State", "TN_BOUNDARY_State"].map((n) => [5, "", "shpP", n + ".shp"]),
  ...["MOEarthquake", "MOHealth", "MOHydro", "MOInfra", "Projections", "StLouis", "USEarthquake", "USHealth"].map((n) => [4, "+", "folder", n]),
  [4, "-", "folder", "USInfra"],
  [5, "", "shpP", "US_GEO_CoalFields.shp"],
  [5, "", "shpP", "US_GEO_SedBasins.shp"],
  [5, "", "shpD", "US_INFRA_CoalMines.shp"],
  [5, "", "shpL", "US_INFRA_OilPipelines.shp"],
  [5, "", "shpD", "US_INFRA_OilTerminals.shp"],
  [5, "", "shpL", "US_INFRA_PetroPipelines.shp"],
  [5, "", "shpD", "US_INFRA_PetroRefineries.shp"],
  [5, "", "shpD", "US_INFRA_PetroTerminals.shp"],
  ...["JeffCity", "KansasCity", "MetroUnemploy", "Springfield", "USBoundary"].map((n) => [4, "+", "gdb", n + ".gdb"]),
  [3, "+", "folder", "ExampleData"],
  [3, "+", "folder", "GISTutorial"],
  [3, "+", "xls", "._metaDictionary.xlsx"],
  [3, "+", "xls", "metaDictionary.xlsx"],
  [2, "+", "folder", "Lectures"],
  [2, "+", "folder", "Notes"],
  [2, "+", "folder", "Readings"],
  [2, "+", "folder", "SnowAssignments"],
];

function TreeRow({ row: [lvl, ex, icon, text, mode] }) {
  return (
    <div className="flex h-[20.400px] shrink-0 items-center whitespace-nowrap" style={{ paddingLeft: lvl ? (lvl - 1) * 22.8 : 0 }}>
      {lvl > 0 && <div className="flex w-[22px] shrink-0 pl-[3px]">{ex && <Expander open={ex === "-"} />}</div>}
      <div className="flex w-[20px] shrink-0"><Icon n={icon} /></div>
      <span className={`ml-[2px] px-[2px] text-[14px] leading-[19px] ${mode === "bold" ? "font-bold tracking-[-0.600px]" : "tracking-[-0.190px]"} ${mode === "hl" ? "bg-[#ededed]" : ""}`}>{text}</span>
    </div>
  );
}

function Catalog() {
  const sep = <Cell w={7}><div className="h-[20px] w-px bg-[#8a8fa0]" /></Cell>;
  return (
    <aside className="ml-[6px] flex w-[360px] shrink-0 flex-col">
      <div className="flex h-[24px] shrink-0 items-center bg-gradient-to-r from-[#9ab4d2] to-[#bad1ea] pl-[5px] pr-[6px]">
        <span className="text-[14px] tracking-[-0.100px] text-[#111]">Catalog</span>
        <PinX c="#000" />
      </div>
      <div className="flex h-[29px] shrink-0 items-center bg-gradient-to-b from-[#fafbff] via-[#e3e7f6] to-[#dde2f2] pl-[4px] pt-px">
        <Cell w={27}><Icon n="cBack" /></Cell><Cell w={16}><Down /></Cell><Cell w={28}><Icon n="cFwd" /></Cell><Cell w={27}><Icon n="cUp" /></Cell>
        <Cell w={28}><Icon n="cHome" /></Cell><Cell w={28}><Icon n="cDb" /></Cell>{sep}
        <Cell w={34}><Icon n="cGrid" s="h-5 w-5" /></Cell><Cell w={12}><Down c="#777" /></Cell><Cell w={14}><div className="h-[20px] w-px bg-[#8a8fa0]" /></Cell>
        <Cell w={26}><Icon n="cConn" /></Cell><Cell w={8}><div className="h-[20px] w-px bg-[#8a8fa0]" /></Cell><Cell w={30}><Icon n="cTree" /></Cell>{sep}<Cell w={29}><Icon n="list" /></Cell>
      </div>
      <div className="flex h-[31px] shrink-0 items-center bg-[#f1f1f1] pl-[3px]">
        <span className="w-[62px] text-[14px] tracking-[-0.350px]">Location:</span>
        <div className="flex h-[26px] w-[290px] items-center border border-[#d5dae2] border-t-[#a5abb6] bg-white pl-[4px] pr-[4px]">
          <Icon n="homeF" />
          <span className="ml-[4px] text-[14px] tracking-[-0.550px]">Home - Prenercg\Desktop</span>
          <span className="ml-auto flex"><Down /></span>
        </div>
      </div>
      <div className="flex h-[1159px] w-[355px] flex-col border border-l-2 border-t-2 border-[#d8d8d8] border-l-[#828282] border-t-[#828282] bg-white">
        <div className="flex h-[1136px]">
          <div className="flex h-full w-[334px] flex-col overflow-hidden">
            {TREE.map((r, i) => <TreeRow key={i} row={r} />)}
          </div>
          <div className="flex h-full w-[18px] flex-col items-center bg-[#efefef]">
            <div className="flex h-[21px] items-center"><Tri r={180} /></div>
            <Thumb vertical cls="h-[955px] w-[17px]" />
            <div className="mt-auto flex h-[20px] items-center"><Tri /></div>
          </div>
        </div>
        <div className="flex h-[19px] items-center bg-[#efefef]">
          <div className="flex w-[40px] justify-start pl-[6px]"><Tri r={90} /></div>
          <Thumb cls="h-[17px] w-[206px]" />
          <div className="ml-[71px]"><Tri r={270} /></div>
        </div>
      </div>
    </aside>
  );
}

/* ---------- symbol selector ---------- */
const SWATCHES = [
  ["Green", "#73b273", ""], ["Blue", "#97dbf2", ""], ["Sun", "#ffff73", ""],
  ["Hollow", "#ffffff", "#111"], ["Lake", "#97dbf2", "#4065eb"], ["Rose", "#ffbebe", "#111"],
  ["Beige", "#ffe8be", "#111"], ["Yellow", "#ffffbe", "#111"], ["Olive", "#e9ffbe", "#111"],
  ["Green", "#d1ffbe", "#111"], ["Jade", "#beffe8", "#111"], ["Blue", "#bee8ff", "#111"],
  ["Med Blue", "#bed2ff", "#111"], ["Lilac", "#e8beff", "#111"], ["Violet", "#ffbee8", "#111"],
];
const Btn = ({ cls, focus, children }) => (
  <div className={`flex h-[25px] items-center justify-center rounded-[3px] border-[1.500px] ${focus ? "border-[#2ba4dc] bg-gradient-to-b from-[#eaf6fd] to-[#bfe3f8] shadow-[inset_0_0_0_1px_#6fd0f5]" : "border-[#7d7d7d] bg-gradient-to-b from-[#f3f3f3] via-[#e9e9e9] to-[#d0d0d0] shadow-[inset_0_0_0_1px_rgba(255,255,255,.7)]"} ${cls}`}>{children}</div>
);
const ColorBtn = ({ c }) => (
  <div className="flex h-[29px] w-[45px] items-center rounded-[3px] border-[1.500px] border-[#777] bg-gradient-to-b from-[#f3f3f3] to-[#d0d0d0] pl-[2px]">
    <div style={{ background: c }} className="h-[22px] w-[25px] border border-[#a0a0a0]" />
    <div className="mx-[3px] h-[19px] w-px bg-[#999]" />
    <svg viewBox="0 0 8 4" className="mt-[2px] h-[4px] w-[7px]"><path d="M0 0h8L4 4z" /></svg>
  </div>
);
const Radio = ({ on }) => (
  <svg viewBox="0 0 14 14" className="h-[15px] w-[15px]"><circle cx="7" cy="7" r="6.300" fill="#f0f0f0" stroke="#8a8f95" /><circle cx="7" cy="7" r="4.500" fill={on ? "#d5e8f5" : "#dedede"} />{on && <circle cx="7" cy="7" r="3.300" fill="#1d5f92" stroke="#123c5e" strokeWidth=".6" />}{on && <circle cx="6" cy="6" r="1.200" fill="#7fd0f5" />}</svg>
);

function SymbolSelector() {
  return (
    <section className="absolute left-[176px] top-[467px] flex h-[649px] w-[627px] flex-col rounded-t-[6px] border-[1.500px] border-b-[#28a9c4] border-l-[#3d5a72] border-r-[#28a9c4] border-t-[#1c1c1c] bg-gradient-to-b from-[#9ab5d3] via-[#b9d1ea] via-[5%] to-[#b9d1ea] px-[8px] pb-[9px] text-[13px] tracking-[-0.150px] shadow-[inset_0_0_0_1px_rgba(255,255,255,.6)]">
      <div className="flex h-[36px] shrink-0 items-center pl-[5px] pr-[2px] pt-[7px]">
        <span className="text-[14px] tracking-[-0.100px] text-[#222]">Symbol Selector</span>
        <div className="ml-auto mb-[2px] flex h-[20px] w-[38px] items-center justify-center rounded-[2px] border border-[#5c1d18] bg-gradient-to-b from-[#e09a8c] via-[#c0402c] to-[#d8705c]">
          <svg viewBox="0 0 16 12" className="h-[11px] w-[15px]" fill="#fff" stroke="#5c3a38" strokeWidth="1"><path d="M2 1h4l2 2.500L10 1h4l-4 5 4 5h-4L8 8.500 6 11H2l4-5z" /></svg>
        </div>
      </div>
      <div className="flex min-h-0 flex-1 bg-[#f0f0f0] pl-[13px]">
        <div className="flex w-[374px] shrink-0 flex-col pt-[12px]">
          <div className="flex h-[25px] items-center">
            <div className="flex h-full w-[273px] shrink-0 items-center border border-[#dfe3e8] border-t-[#a5abb6] bg-white px-[3px]">
              <div className="flex h-[18px] w-[245px] shrink-0 items-center bg-[#efefef]"><span className="bg-white pl-[2px] pr-[2px] text-[#666]">Type here to search</span></div>
              <span className="ml-auto flex"><Down /></span>
            </div>
            <div className="ml-[10px] flex items-center"><Icon n="find" s="h-5 w-5" /></div>
            <div className="ml-[9px] flex"><Icon n="unfind" s="h-5 w-5" /></div>
            <div className="ml-[9px] flex"><Icon n="grid4" s="h-5 w-5" /></div>
            <div className="ml-[8px] flex"><Down /></div>
          </div>
          <div className="mt-[7px] flex h-[22px] items-center">
            <span className="w-[77px] pb-px">Search:</span>
            <Radio on /><span className="ml-[4px] w-[117px]">All Styles</span>
            <Radio /><span className="ml-[4px] tracking-normal">Referenced Styles</span>
          </div>
          <div className="mt-[9px] flex h-[514px] border border-[#828790] bg-white">
            <div className="flex w-[350px] flex-col">
              <div className="flex h-[25px] items-center pl-[16px] text-[#1a3f94]">ESRI<div className="ml-[5px] h-px w-[291px] bg-[#b4bfe0]" /></div>
              <div className="-ml-[1px] mt-[5px] grid w-[288px] grid-cols-3">
                {SWATCHES.map(([n, c, l], i) => (
                  <div key={i} className="flex h-[96px] flex-col items-center">
                    <div style={{ background: c, borderColor: l || c }} className="ml-[6px] h-[44.500px] w-[45px] border-[1.500px]" />
                    <span className="mt-[3px] pl-[3px] leading-[20px] text-[#111]">{n}</span>
                  </div>
                ))}
              </div>
            </div>
            <div className="ml-auto mr-px flex w-[19px] flex-col items-center bg-[#efefef]">
              <div className="flex h-[23px] items-center"><Tri r={180} /></div>
              <Thumb vertical cls="h-[117px] w-[17px]" />
              <div className="mt-auto flex h-[23px] items-center"><Tri /></div>
            </div>
          </div>
        </div>
        <div className="ml-[13px] flex w-[197px] flex-col pt-[10px]">
          <div className="flex h-[20px] items-center px-[1px]">
            <div className="h-px w-[6px] bg-[#d5dfe8]" /><span className="px-[3px] leading-none">Current Symbol</span><div className="h-px flex-1 bg-[#d5dfe8]" />
          </div>
          <div className="-mt-[10px] flex h-[352px] flex-col rounded-[3px] border border-t-0 border-[#d5dfe8] pt-[15px] shadow-[inset_0_-1px_0_rgba(255,255,255,.5)]">
            <div className="ml-[13px] h-[95px] w-[169px] shrink-0 border-[1.500px] border-[#111] bg-[#ffe8be]" />
            <div className="mt-[38px] flex h-[29px] items-center pl-[22px]"><span className="w-[96px]">Fill Color:</span><ColorBtn c="#ffe8be" /></div>
            <div className="mt-[12px] flex h-[27px] items-center pl-[22px]">
              <span className="w-[95px] whitespace-nowrap">Outline Width:</span>
              <div className="flex h-[27px] w-[68px] justify-between border border-[#d9dde2] bg-white p-px">
                <span className="pl-[5px] leading-[22px]">0.40</span>
                <div className="flex w-[19px] flex-col gap-px">
                  <div className="flex flex-1 items-center justify-center border border-[#aab] bg-[#ececf0]"><svg viewBox="0 0 8 4" className="h-[4px] w-[7px]"><path d="M0 4h8L4 0z" fill="#4a66b5" /></svg></div>
                  <div className="flex flex-1 items-center justify-center border border-[#aab] bg-[#ececf0]"><svg viewBox="0 0 8 4" className="h-[4px] w-[7px]"><path d="M0 0h8L4 4z" fill="#4a66b5" /></svg></div>
                </div>
              </div>
            </div>
            <div className="mt-[13px] flex h-[29px] items-center pl-[22px]"><span className="w-[96px] whitespace-nowrap">Outline Color:</span><ColorBtn c="#000" /></div>
            <Btn cls="mt-[26px] ml-[42px] w-[113px]">Edit Symbol...</Btn>
            <div className="mt-[10px] flex justify-between pl-[6px] pr-[6px]"><Btn cls="w-[87px]">Save As...</Btn><Btn focus cls="w-[87px]">Reset</Btn></div>
          </div>
          <Btn cls="mt-[154px] w-[196px]">Style References...</Btn>
          <div className="mt-[11px] flex w-[196px] justify-between"><Btn cls="w-[88px]">OK</Btn><Btn cls="w-[88px]">Cancel</Btn></div>
        </div>
        <svg viewBox="0 0 10 10" className="mb-[4px] mt-auto h-[10px] w-[10px]" fill="#bbb"><path d="M8 0h2v2H8zM4 4h2v2H4zM8 4h2v2H8zM0 8h2v2H0zM4 8h2v2H4zM8 8h2v2H8z" /></svg>
      </div>
    </section>
  );
}

/* ---------- taskbar ---------- */
const TASKS = [
  <svg viewBox="0 0 44 44" className="h-[44px] w-[44px]">
    <defs><radialGradient id="orb" cx=".5" cy=".9" r=".9"><stop offset="0" stopColor="#2ed5ff" /><stop offset=".4" stopColor="#1376b4" /><stop offset="1" stopColor="#0f3a63" /></radialGradient></defs>
    <circle cx="22" cy="22" r="21" fill="url(#orb)" stroke="#9fc0dc" strokeWidth="1.200" />
    <path d="M3 19a19 19 0 0138 0q-19 6-38 0z" fill="#fff" opacity=".3" />
    <path d="M13 12q4-3 9 0l-2 9q-4-3-9 0z" fill="#ef5a2b" /><path d="M24 12.500q5 3 12 0l-3 9q-5 3-11 0z" fill="#8cc63e" />
    <path d="M10.500 23q5-3 9 0l-2 9q-4-3-9 0z" fill="#4fb4ec" /><path d="M21.500 23.500q5 3 11 0l-2.500 9q-6 3-11 0z" fill="#fbc72c" />
  </svg>,
  <svg viewBox="0 0 40 40" className="h-[40px] w-[40px]">
    <path d="M35 26H27q-2 4-7 4-7 0-7-8h23q1-17-15-17T5 21t16 15q11 0 14-10zM13 17q1-6 7.500-6T28 17z" fill="#45b9ef" stroke="#1c7fc0" />
    <path d="M34 11q4-10-6-8Q14 6 6 22 0 34 5 37q4 2 10-3" fill="none" stroke="#f5c62c" strokeWidth="2.800" />
  </svg>,
  <svg viewBox="0 0 40 40" className="h-[40px] w-[40px]">
    <path d="M2 8V4h10l2 3h7v-1h8l2 3h7v26H2z" fill="#e9cf80" stroke="#b99a4a" />
    <path d="M5 5h6M14 7h6M24 10h7" stroke="#fff" strokeWidth="3" /><path d="M5 4.500h3.500" stroke="#22a33a" strokeWidth="3" /><path d="M15 7h3" stroke="#d33" strokeWidth="3" /><path d="M25 10h3" stroke="#2b8fe0" strokeWidth="3" />
    <path d="M2 13h36v23H2z" fill="#f8e9ad" stroke="#c9ab5c" />
    <path d="M7 38V24h26v14h-7v-8H14v8z" fill="#a8dbf3" stroke="#5aa9d2" />
  </svg>,
  <svg viewBox="0 0 40 40" className="h-[38px] w-[38px]">
    <circle cx="20" cy="20" r="18.500" fill="#fdc93a" />
    <path d="M4 10.800A18.500 18.500 0 0018.500 38.400L27.500 24.300A8.700 8.700 0 0112.500 24.300z" fill="#1da160" />
    <path d="M4 10.800A18.500 18.500 0 0136.500 11.300H20A8.700 8.700 0 0012 24z" fill="#dd4b3e" />
    <circle cx="20" cy="20" r="8.200" fill="#fff" /><circle cx="20" cy="20" r="6.500" fill="#4a8af4" />
  </svg>,
  <svg viewBox="0 0 40 40" className="h-[40px] w-[40px]">
    <path d="M8 3h28v34H3V8z" fill="#dff0dd" stroke="#2d8a42" strokeWidth="2" /><path d="M6 6h28v12H6z" fill="#a5d6a0" opacity=".7" />
    <path d="M8 8h7l4 7 5-8h4l-7 11 7 10h-7l-4-7-5 7H7l8-11z" fill="#1d7a3a" />
    <path d="M18 24l19-3-3 14H15z" fill="#fff" stroke="#9bc59b" /><path d="M19 27h15M18 30h15M17 33h15M25 23l-3 12M30 22l-3 13" stroke="#7ab67a" />
  </svg>,
  <svg viewBox="0 0 40 40" className="h-[40px] w-[40px]">
    <path d="M14 7l14-5 10 4v25l-14 6-10-5z" fill="#dbb92c" stroke="#7a6412" /><path d="M24 11l14-5v25l-14 6z" fill="#a88b1c" /><path d="M14 7l10 4 14-5-10-4z" fill="#f2dc74" />
    <path d="M17 11l6 2.500v4L17 15z" fill="#7a6412" />
    <circle cx="14" cy="22" r="8" fill="#2a6ea8" /><path d="M12 15l6 1 2 5-5 2z" fill="#6aad45" />
    <path d="M1 24l11 6 12-5v6l-12 7-10-7z" fill="#ecce4a" stroke="#7a6412" /><path d="M4 29l5 2.500" stroke="#222" strokeWidth="1.500" />
  </svg>,
  <svg viewBox="0 0 40 40" className="h-[41px] w-[41px]">
    <defs><radialGradient id="glb" cx=".4" cy=".4" r=".7"><stop offset="0" stopColor="#3b9cd6" /><stop offset="1" stopColor="#0c2f5c" /></radialGradient></defs>
    <circle cx="20" cy="19" r="18" fill="url(#glb)" /><path d="M22 3q10 2 13 12l-5 8-4-6zM13 4q4-3 6 0l-7 5zM22 27l7-1 1 6-6 3z" fill="#5fae3a" />
    <path d="M25 24l12 12" stroke="#c0662e" strokeWidth="4.500" strokeLinecap="round" />
    <circle cx="18" cy="17" r="10" fill="#d3ebf8" stroke="#eef3f6" strokeWidth="2.200" /><path d="M12 14q3-5 7-3l-1 7-4 3z" fill="#6fbbe4" />
  </svg>,
  <svg viewBox="0 0 40 40" className="h-[38px] w-[38px]">
    <defs><linearGradient id="atm" x1="0" y1="0" x2="0" y2="1"><stop offset="0" stopColor="#8fdb92" /><stop offset="1" stopColor="#11a06c" /></linearGradient></defs>
    <circle cx="20" cy="20" r="19.500" fill="url(#atm)" />
    <g fill="none" stroke="#fff" strokeWidth="1.500"><ellipse cx="20" cy="20" rx="13" ry="4.800" transform="rotate(20 20 20)" /><ellipse cx="20" cy="20" rx="13" ry="4.800" transform="rotate(80 20 20)" /><ellipse cx="20" cy="20" rx="13" ry="4.800" transform="rotate(140 20 20)" /></g><circle cx="20" cy="20" r="1.800" fill="#fff" />
  </svg>,
  <svg viewBox="0 0 40 40" className="h-[39px] w-[39px]">
    <defs><linearGradient id="rst" x1="0" y1="0" x2="0" y2="1"><stop offset="0" stopColor="#6f9dec" /><stop offset=".5" stopColor="#1c50c2" /><stop offset="1" stopColor="#5ab4f4" /></linearGradient></defs>
    <ellipse cx="20" cy="37" rx="17" ry="2.500" fill="#5c6f88" opacity=".6" /><circle cx="20" cy="19.500" r="18.500" fill="url(#rst)" /><ellipse cx="20" cy="9.500" rx="13" ry="7.500" fill="#fff" opacity=".35" />
    <text x="20.500" y="26.500" textAnchor="middle" fontSize="22" fontFamily="Liberation Serif" fill="#fff" stroke="#fff" strokeWidth=".5">R</text>
  </svg>,
  <svg viewBox="0 0 40 40" className="h-[38px] w-[38px]">
    <defs><linearGradient id="gh" x1="0" y1="0" x2="0" y2="1"><stop offset="0" stopColor="#a94bb4" /><stop offset="1" stopColor="#56307c" /></linearGradient></defs>
    <circle cx="20" cy="20" r="18.500" fill="url(#gh)" stroke="#e7d6ee" strokeWidth="1.500" />
    <path d="M9.500 10l5.500 3.500q5-1.500 10 0L30.500 10q1.800 5 .7 9 .5 10.500-6.500 10.500h-9.400q-7 0-6.500-10.500-1.100-4 .7-9z" fill="#f4ecf7" />
  </svg>,
];

function Taskbar() {
  return (
    <footer className="flex h-[48px] shrink-0 border-t border-[#4d5a68] bg-[linear-gradient(90deg,#7f92ab_0,#8396b0_60px,#a5bfdd_105px,#a5bfdd_2035px,#8195ae_2075px,#8195ae_100%)] shadow-[inset_0_1px_0_rgba(255,255,255,.35)]">
      <div className="w-[64px] flex items-center justify-center">{TASKS[0]}</div>
      <div className="ml-[5px] flex">
        {TASKS.slice(1).map((t, i) => (
          <div key={i} className="flex h-full w-[74.400px] items-center justify-center">
            {i === 5 ? <div className="flex h-full w-[71px] items-center justify-center rounded-[3px] border-[1.500px] border-[#3c4653] bg-gradient-to-br from-[#e6edf5] to-[#c4d3e6] shadow-[inset_0_0_0_1px_#fff]">{t}</div> : t}
          </div>
        ))}
      </div>
      <div className="ml-auto flex items-center">
        <svg viewBox="0 0 10 5" className="h-[5px] w-[10px]"><path d="M0 5h10L5 0z" fill="#eef2f6" /></svg>
        <svg viewBox="0 0 20 18" className="ml-[14px] h-[17px] w-[19px]" fill="#eef2f6"><path d="M5.500 1L10 4 5.500 7 1 4zM14.500 1L19 4l-4.500 3L10 4zM5.500 7L10 10l-4.500 3L1 10zM14.500 7l4.500 3-4.500 3L10 10zM10 11.500l4 2.700-4 2.600-4-2.600z" /></svg>
        <svg viewBox="0 0 20 18" className="ml-[10px] h-[18px] w-[20px]" fill="none" stroke="#eef2f6" strokeWidth="1.600"><path d="M6 5h13v9H6zM8 17h9M3 1v4M1 5h5v4H1zM3.500 9v8" /></svg>
        <svg viewBox="0 0 20 18" className="ml-[8px] h-[18px] w-[20px]"><path d="M1 6h3l5-5v15l-5-5H1z" fill="#eef2f6" /><path d="M11 5q2 3 0 7" stroke="#eef2f6" fill="none" /><circle cx="14" cy="12.500" r="5.200" fill="#d93a2c" /><path d="M12 10.500l4 4M16 10.500l-4 4" stroke="#fff" strokeWidth="1.600" /></svg>
        <div className="ml-[12px] flex w-[78px] flex-col items-center text-[14px] leading-[20px] tracking-[-0.100px] text-white"><span>1:34 PM</span><span>4/9/2018</span></div>
        <div className="ml-[4px] h-full w-[18px] border border-[#4e5d70] bg-gradient-to-br from-[#8a9cb4] to-[#4f5f76]" />
      </div>
    </footer>
  );
}

export default function App() {
  return (
    <div className="relative flex h-[1440px] w-[2560px] justify-start overflow-hidden bg-black pl-[128px] font-['Open_Sans','Noto_Sans',sans-serif] text-[#111]">
      <div className="flex h-full w-[2304px] flex-col overflow-hidden bg-[#f0f0f0]">
        <Header />
        <div className="flex h-[1248px] shrink-0">
          <Toc />
          <MapView />
          <Catalog />
        </div>
        <div className="flex h-[25px] shrink-0 items-center pl-[2000px] pt-[2px] text-[14px] tracking-[-0.150px]"><span className="whitespace-pre">-98.69  39.421 Decimal Degrees</span></div>
        <Taskbar />
      </div>
      <SymbolSelector />
      <svg viewBox="0 0 14 22" className="absolute left-[726px] top-[362px] h-[23px] w-[15px]">
        <path d="M1 1v16l4-3.500 2.800 7 3-1.300L8 12.500h5z" fill="#fff" stroke="#444" strokeWidth="1.300" />
      </svg>
    </div>
  );
}
